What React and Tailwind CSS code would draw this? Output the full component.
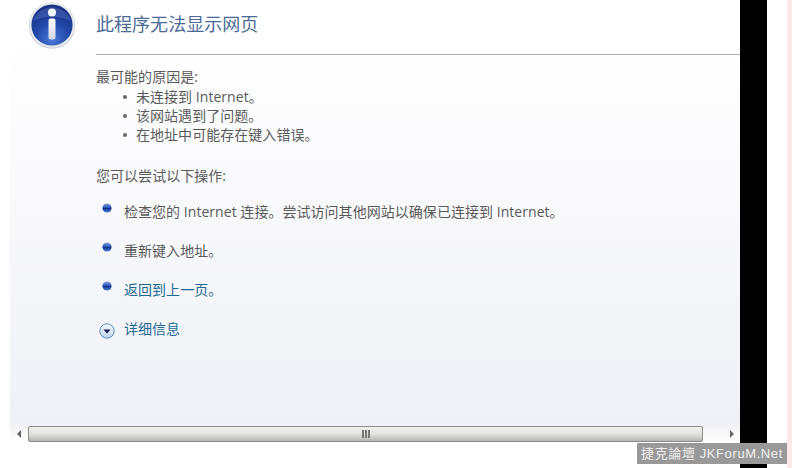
const InfoIcon = () => (
  <svg width="48" height="48" viewBox="0 0 48 48" className="shrink-0">
    <defs>
      <radialGradient id="infoBg" cx="50%" cy="85%" r="75%">
        <stop offset="0%" stopColor="#4a78d6" />
        <stop offset="55%" stopColor="#2148a8" />
        <stop offset="100%" stopColor="#1a3488" />
      </radialGradient>
      <linearGradient id="infoBar" x1="0" y1="0" x2="0" y2="1">
        <stop offset="0%" stopColor="#ffffff" />
        <stop offset="100%" stopColor="#d2d7e6" />
      </linearGradient>
    </defs>
    <circle cx="24" cy="24.6" r="23.2" fill="#9a9ea8" opacity="0.45" />
    <circle cx="24" cy="24" r="22.5" fill="#e8eaf0" />
    <circle cx="24" cy="24" r="20.6" fill="url(#infoBg)" />
    <path d="M5 20 A20 20 0 0 1 43 20 Q24 11 5 20Z" fill="#8ea8e2" opacity="0.22" />
    <circle cx="24" cy="11.5" r="4" fill="#f4f6fb" />
    <rect x="20.5" y="17.5" width="7" height="21" rx="2" fill="url(#infoBar)" />
  </svg>
);

const Bullet = () => (
  <svg width="10" height="10" viewBox="0 0 10 10" className="shrink-0">
    <defs>
      <linearGradient id="ballFill" x1="0" y1="0" x2="0" y2="1">
        <stop offset="0%" stopColor="#8fa6dc" />
        <stop offset="45%" stopColor="#2a56b8" />
        <stop offset="55%" stopColor="#12328c" />
        <stop offset="100%" stopColor="#4f86e0" />
      </linearGradient>
    </defs>
    <circle cx="5" cy="5" r="4.6" fill="url(#ballFill)" />
  </svg>
);

const ExpandIcon = () => (
  <svg width="16" height="16" viewBox="0 0 16 16" className="shrink-0">
    <defs>
      <linearGradient id="expandFill" x1="0" y1="0" x2="0" y2="1">
        <stop offset="0%" stopColor="#f6f9fd" />
        <stop offset="100%" stopColor="#bcd3ec" />
      </linearGradient>
    </defs>
    <circle cx="8" cy="8" r="7.2" fill="url(#expandFill)" stroke="#5f8fbd" strokeWidth="1" />
    <path d="M4.5 6.5H11.5L8 10.5Z" fill="#10204a" />
  </svg>
);

const reasons = ["未连接到 Internet。", "该网站遇到了问题。", "在地址中可能存在键入错误。"];

const ActionRow = ({ children, link }) => (
  <div className="flex h-[39px] items-center">
    <div className="w-7 pb-2 pl-1.5">
      <Bullet />
    </div>
    <span className={link ? "text-[#1d6a94]" : "text-[#5a5a5a]"}>{children}</span>
  </div>
);

const ScrollBar = () => (
  <div className="flex h-[16px] items-stretch bg-gradient-to-b from-[#f3f3f3] to-white">
    <div className="flex w-[18px] items-center justify-center">
      <div className="h-0 w-0 border-y-[4px] border-r-[4px] border-y-transparent border-r-[#666666]" />
    </div>
    <div className="flex w-[675px] items-center justify-center rounded-[2px] border border-[#8c8c8c] bg-gradient-to-b from-[#f0f0ec] via-[#e2e2de] to-[#b4b4b4]">
      <div className="flex gap-px">
        <div className="h-2 w-0.5 bg-[#777777]" />
        <div className="h-2 w-0.5 bg-[#777777]" />
        <div className="h-2 w-0.5 bg-[#777777]" />
      </div>
    </div>
    <div className="flex flex-1 items-center justify-end pr-1.5">
      <div className="h-0 w-0 border-y-[4px] border-l-[4px] border-y-transparent border-l-[#666666]" />
    </div>
  </div>
);

export default function App() {
  return (
    <div className="relative flex h-[468px] w-[792px] overflow-hidden bg-white font-['Open_Sans','Noto_Sans_CJK_SC',sans-serif] text-[14px] tracking-[0.04px] text-[#5a5a5a]">
      {/* browser page */}
      <div className="flex w-[740px] flex-col pl-2.5">
        <div className="h-[426px] bg-gradient-to-b from-white from-[8%] to-[#f0f1f7]">
          <div className="flex h-[54px] items-start pl-[18px] pt-[1px]">
            <InfoIcon />
            <h1 className="ml-5 pt-[10px] text-[18px] leading-[26px] text-[#4a6b96]">此程序无法显示网页</h1>
          </div>
          <div className="ml-[86px] h-px bg-[#b0b0b0]" />
          <div className="pl-[86px] pt-[12px] leading-[19px]">
            <p className="h-[19px] leading-[19px]">最可能的原因是:</p>
            <ul className="mt-[1px] pl-[27px]">
              {reasons.map((r) => (
                <li key={r} className="flex h-[19px] items-center">
                  <span className="mr-[9px] h-1 w-1 rounded-full bg-[#666666]" />
                  {r}
                </li>
              ))}
            </ul>
            <p className="mt-[22px] h-[19px]">您可以尝试以下操作:</p>
            <div className="mt-[7px]">
              <ActionRow>检查您的 Internet 连接。尝试访问其他网站以确保已连接到 Internet。</ActionRow>
              <ActionRow>重新键入地址。</ActionRow>
              <ActionRow link>返回到上一页。</ActionRow>
              <div className="flex h-[39px] items-center">
                <div className="w-7 pt-1 pl-[3px]">
                  <ExpandIcon />
                </div>
                <span className="text-[#1d6a94]">详细信息</span>
              </div>
            </div>
          </div>
        </div>
        <ScrollBar />
      </div>

      <div className="w-[27px] bg-black" />
      <div className="w-5 bg-white" />
      <div className="w-[5px] bg-[#fbe9ea]" />

      {/* forum watermark */}
      <div className="absolute left-[637px] top-[443px] flex h-[21px] w-[150px] items-center justify-center bg-[#999999] font-['Liberation_Sans','Noto_Sans_CJK_TC',sans-serif] text-[13px] tracking-[0.6px] whitespace-nowrap text-[#f0f0f0]">
        捷克論壇 JKForuM.Net
      </div>
    </div>
  );
}
